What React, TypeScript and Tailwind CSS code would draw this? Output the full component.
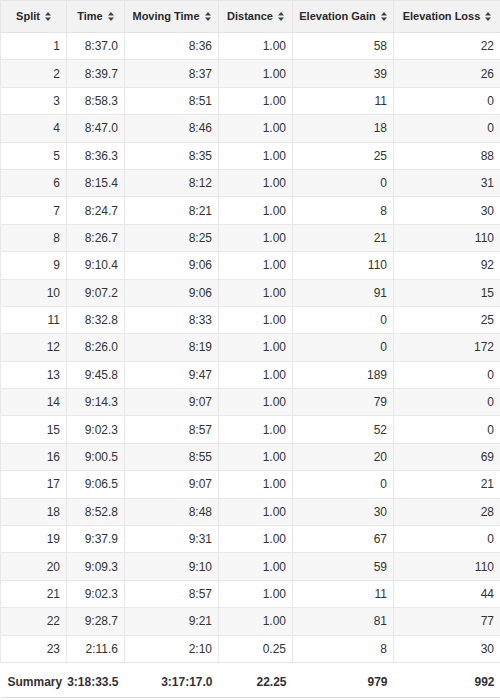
const splits = [
  ["1", "8:37.0", "8:36", "1.00", "58", "22"],
  ["2", "8:39.7", "8:37", "1.00", "39", "26"],
  ["3", "8:58.3", "8:51", "1.00", "11", "0"],
  ["4", "8:47.0", "8:46", "1.00", "18", "0"],
  ["5", "8:36.3", "8:35", "1.00", "25", "88"],
  ["6", "8:15.4", "8:12", "1.00", "0", "31"],
  ["7", "8:24.7", "8:21", "1.00", "8", "30"],
  ["8", "8:26.7", "8:25", "1.00", "21", "110"],
  ["9", "9:10.4", "9:06", "1.00", "110", "92"],
  ["10", "9:07.2", "9:06", "1.00", "91", "15"],
  ["11", "8:32.8", "8:33", "1.00", "0", "25"],
  ["12", "8:26.0", "8:19", "1.00", "0", "172"],
  ["13", "9:45.8", "9:47", "1.00", "189", "0"],
  ["14", "9:14.3", "9:07", "1.00", "79", "0"],
  ["15", "9:02.3", "8:57", "1.00", "52", "0"],
  ["16", "9:00.5", "8:55", "1.00", "20", "69"],
  ["17", "9:06.5", "9:07", "1.00", "0", "21"],
  ["18", "8:52.8", "8:48", "1.00", "30", "28"],
  ["19", "9:37.9", "9:31", "1.00", "67", "0"],
  ["20", "9:09.3", "9:10", "1.00", "59", "110"],
  ["21", "9:02.3", "8:57", "1.00", "11", "44"],
  ["22", "9:28.7", "9:21", "1.00", "81", "77"],
  ["23", "2:11.6", "2:10", "0.25", "8", "30"],
];

const columns = [
  { label: "Split", width: "w-[66px]" },
  { label: "Time", width: "w-[58px]" },
  { label: "Moving Time", width: "w-[94px]" },
  { label: "Distance", width: "w-[74px]" },
  { label: "Elevation Gain", width: "w-[101px]" },
  { label: "Elevation Loss", width: "w-[107px]" },
];

const summary = ["Summary", "3:18:33.5", "3:17:17.0", "22.25", "979", "992"];

function SortIcon() {
  return (
    <svg width="6" height="9" viewBox="0 0 6 9" className="ml-[5px] inline-block align-[-1px]">
      <path d="M3 0 L6 3.6 H0 Z" fill="#444" />
      <path d="M3 9 L6 5.4 H0 Z" fill="#444" />
    </svg>
  );
}

export default function App() {
  return (
    <div className="h-[700px] w-[500px] bg-white font-['Liberation_Sans',Arial,sans-serif] text-[#333]">
      <table className="w-[500px] table-fixed border-collapse">
        <thead>
          <tr className="h-[32px] bg-[#f2f2f2]">
            {columns.map((col) => (
              <th
                key={col.label}
                className={`${col.width} border border-[#e4e4e4] px-0 text-center text-[11px] font-bold whitespace-nowrap text-[#2a2a2a]`}
              >
                {col.label}
                <SortIcon />
              </th>
            ))}
          </tr>
        </thead>
        <tbody>
          {splits.map((row, i) => (
            <tr key={row[0]} className={`h-[27.4px] ${i % 2 === 1 ? "bg-[#f7f7f7]" : "bg-white"}`}>
              {row.map((cell, j) => (
                <td
                  key={j}
                  className="border border-[#e8e8e8] pr-[6px] text-right text-[12px] leading-none"
                >
                  {cell}
                </td>
              ))}
            </tr>
          ))}
          <tr className="h-[35px] border-b border-[#dcdcdc] bg-white">
            {summary.map((cell, j) => (
              <td
                key={j}
                className={`pt-[4px] pr-[6px] text-[12px] font-bold leading-none ${j === 0 ? "pl-[7px] text-left" : "text-right"}`}
              >
                {cell}
              </td>
            ))}
          </tr>
        </tbody>
      </table>
    </div>
  );
}
